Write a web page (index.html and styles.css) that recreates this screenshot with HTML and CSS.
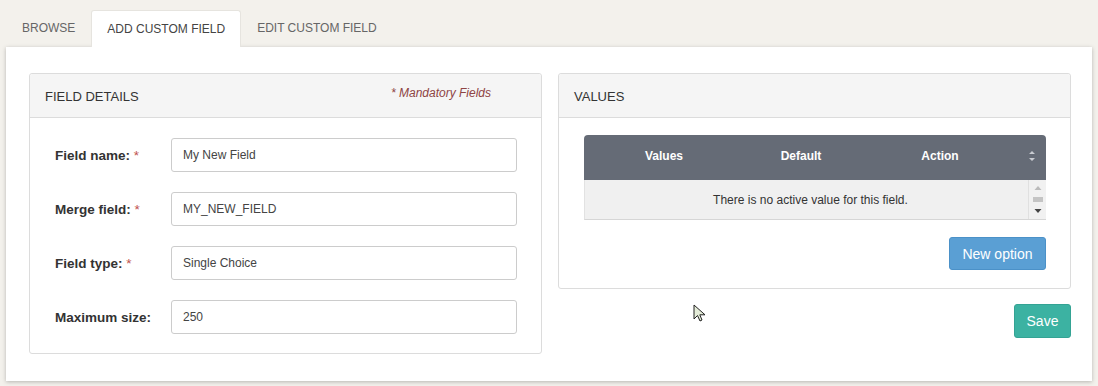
FILE: index.html
```html
<!DOCTYPE html>
<html lang="en">

<head>
    <meta charset="UTF-8">
    <title>Custom Fields</title>
    <link rel="stylesheet" href="styles.css">
</head>

<body>

    <ul class="tabs">
        <li class="tab">Browse</li>
        <li class="tab active">Add custom field</li>
        <li class="tab">Edit custom field</li>
    </ul>

    <div class="content">
        <div class="panel field-details">
            <div class="panel-heading">
                <span class="panel-title">Field details</span>
                <span class="mandatory">* Mandatory Fields</span>
            </div>
            <div class="panel-body form">
                <div class="form-row">
                    <label>Field name: <span class="req">*</span></label>
                    <input type="text" value="My New Field">
                </div>
                <div class="form-row">
                    <label>Merge field: <span class="req">*</span></label>
                    <input type="text" value="MY_NEW_FIELD">
                </div>
                <div class="form-row">
                    <label>Field type: <span class="req">*</span></label>
                    <input type="text" value="Single Choice">
                </div>
                <div class="form-row">
                    <label>Maximum size:</label>
                    <input type="text" value="250">
                </div>
            </div>
        </div>

        <div class="right-col">
            <div class="panel values">
                <div class="panel-heading">
                    <span class="panel-title">Values</span>
                </div>
                <div class="panel-body">
                    <div class="values-table">
                        <div class="table-head">
                            <span class="col col-values">Values</span>
                            <span class="col col-default">Default</span>
                            <span class="col col-action">Action</span>
                            <span class="sort">
                                <svg width="6" height="12" viewBox="0 0 6 12"><path d="M0 4 L3 1 L6 4 Z M0 8 L3 11 L6 8 Z" fill="#c9ccd2"/></svg>
                            </span>
                        </div>
                        <div class="table-row">
                            <span class="empty">There is no active value for this field.</span>
                            <span class="scrollbar">
                                <svg width="10" height="34" viewBox="0 0 10 34"><path d="M1.5 7 L5 3 L8.5 7 Z" fill="#bbb"/><rect x="0" y="14" width="10" height="5" fill="#c4c4c4"/><path d="M1.5 26 L5 30 L8.5 26 Z" fill="#444"/></svg>
                            </span>
                        </div>
                    </div>
                    <div class="btn-row">
                        <button class="btn btn-blue">New option</button>
                    </div>
                </div>
            </div>
            <div class="btn-row save-row">
                <button class="btn btn-teal">Save</button>
            </div>
        </div>
    </div>

    <svg class="cursor" width="14" height="20" viewBox="0 0 14 20">
        <path d="M1 1 L1 15 L4.5 11.5 L7 17 L9 16 L6.8 10.8 L12 10.8 Z" fill="#e4ecd8" stroke="#222" stroke-width="1"/>
    </svg>

</body>

</html>
```

FILE: styles.css
```css
body {
    margin: 0;
    background-color: #f3f1ec;
    font-family: "Liberation Sans", Arial, sans-serif;
    color: #333;
    position: relative;
    height: 386px;
    overflow: hidden;
}

.tabs {
    list-style: none;
    margin: 0;
    padding: 10px 0 0 6px;
    display: flex;
    height: 37px;
}

.tab {
    padding: 0 16px;
    line-height: 37px;
    font-size: 12px;
    text-transform: uppercase;
    color: #666;
}

.tab.active {
    background-color: #fff;
    color: #444;
    border: 1px solid #e6e4df;
    border-bottom: none;
    border-radius: 3px 3px 0 0;
    line-height: 36px;
    padding: 0 15px;
}

.content {
    margin: 0 6px;
    height: 334px;
    box-sizing: border-box;
    background-color: #fff;
    box-shadow: 0 1px 4px rgba(0, 0, 0, 0.25);
    padding: 26px 21px 0 23px;
    display: flex;
    align-items: flex-start;
    gap: 16px;
}

.panel {
    width: 513px;
    box-sizing: border-box;
    border: 1px solid #dcdcdc;
    border-radius: 3px;
    background-color: #fff;
}

.panel-heading {
    height: 43px;
    background-color: #f5f5f5;
    border-bottom: 1px solid #dcdcdc;
    display: flex;
    align-items: center;
    justify-content: space-between;
    padding: 0 50px 0 15px;
    border-radius: 3px 3px 0 0;
}

.panel-title {
    font-size: 13px;
    text-transform: uppercase;
    color: #333;
    margin-top: 2px;
}

.mandatory {
    font-size: 12px;
    font-style: italic;
    color: #8e4444;
    margin-top: -6px;
}

.form {
    padding: 20px 24px 19px 25px;
    display: flex;
    flex-direction: column;
    gap: 20px;
}

.form-row {
    display: flex;
    align-items: center;
}

.form-row label {
    width: 116px;
    font-size: 13.5px;
    font-weight: bold;
    color: #333;
}

.req {
    color: #c0504d;
    font-weight: normal;
}

.form-row input {
    flex: 1;
    height: 34px;
    box-sizing: border-box;
    border: 1px solid #ccc;
    border-radius: 3px;
    padding: 0 11px;
    font-family: "Liberation Sans", Arial, sans-serif;
    font-size: 12px;
    color: #444;
}

.right-col {
    display: flex;
    flex-direction: column;
}

.values .panel-body {
    padding: 17px 24px 18px 25px;
}

.values-table {
    border-radius: 4px 4px 0 0;
    overflow: hidden;
}

.table-head {
    height: 45px;
    box-sizing: border-box;
    padding-bottom: 4px;
    background-color: #656b76;
    display: flex;
    align-items: center;
    color: #fff;
    font-size: 12px;
    font-weight: bold;
}

.col {
    text-align: center;
}

.col-values {
    width: 160px;
}

.col-default {
    width: 114px;
}

.col-action {
    width: 164px;
}

.sort {
    flex: 1;
    display: flex;
    justify-content: flex-end;
    padding-right: 11px;
}

.sort svg {
    display: block;
}

.table-row {
    height: 40px;
    box-sizing: border-box;
    background-color: #f0f0f0;
    border-bottom: 1px solid #d6d6d6;
    border-left: 1px solid #e2e2e2;
    display: flex;
    align-items: center;
}

.empty {
    flex: 1;
    text-align: center;
    font-size: 12px;
    color: #333;
    padding-left: 8px;
}

.scrollbar {
    width: 17px;
    height: 39px;
    border-left: 1px solid #e0e0e0;
    background-color: #f1f1f1;
    display: flex;
    align-items: center;
    justify-content: center;
}

.scrollbar svg {
    display: block;
}

.btn-row {
    display: flex;
    justify-content: flex-end;
    margin-top: 17px;
}

.btn {
    border-radius: 3px;
    font-family: "Liberation Sans", Arial, sans-serif;
    font-size: 14px;
    color: #fff;
    cursor: pointer;
}

.btn-blue {
    height: 33px;
    width: 97px;
    background-color: #5a9fd4;
    border: 1px solid #4b91c8;
}

.save-row {
    margin-top: 15px;
}

.btn-teal {
    height: 34px;
    width: 57px;
    background-color: #3cb2a2;
    border: 1px solid #34a394;
}

.cursor {
    position: absolute;
    left: 693px;
    top: 304px;
}
```
